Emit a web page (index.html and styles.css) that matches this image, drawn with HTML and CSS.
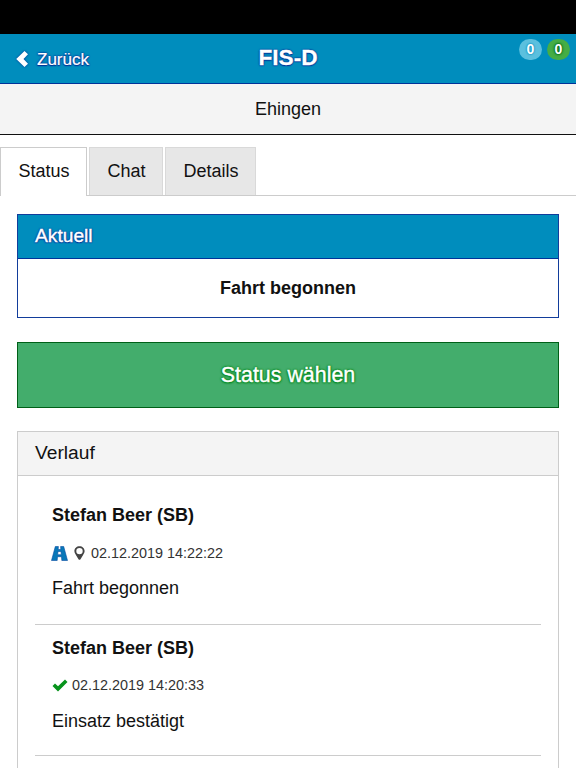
FILE: index.html
```html
<!DOCTYPE html>
<html lang="de">
<head>
<meta charset="utf-8">
<title>FIS-D</title>
<link rel="stylesheet" href="styles.css">
</head>
<body>
<div class="system-bar"></div>
<header class="navbar">
  <a class="back">
    <svg class="chevron" viewBox="0 0 12 16"><path d="M8.500 0 12 3.300 7.500 8 12 12.700 8.500 16 .2 8Z"/></svg>
    <span>Zurück</span>
  </a>
  <h1 class="title">FIS-D</h1>
  <div class="badges"><span class="badge info">0</span><span class="badge success">0</span></div>
</header>
<div class="location">Ehingen</div>
<nav class="tabs">
  <a class="tab active">Status</a>
  <a class="tab">Chat</a>
  <a class="tab">Details</a>
</nav>
<main>
  <section class="panel primary">
    <h2 class="panel-title">Aktuell</h2>
    <p class="current">Fahrt begonnen</p>
  </section>
  <button class="choose">Status wählen</button>
  <section class="panel history">
    <h2 class="panel-title">Verlauf</h2>
    <div class="entries">
      <article class="entry">
        <h3>Stefan Beer (SB)</h3>
        <div class="meta">
          <svg class="road" viewBox="0 0 17 15"><path fill="#0878b8" stroke="#074da3" stroke-width=".6" d="M4.300.5H7.400L7.200 3.500H9.800L9.600.5H12.700L16.500 14.500H10.800L10.500 10.700H6.500L6.200 14.500H.5ZM7 5.500 6.700 8.700H10.300L10 5.500Z"/></svg>
          <svg class="pin" viewBox="0 0 11 14"><path fill="#444" fill-rule="evenodd" d="M5.500.3C2.600.3.400 2.400.400 5.100.400 6.800 1.300 8 2.200 9.500L4.500 13.300Q5.500 14.300 6.500 13.300L8.800 9.500C9.700 8 10.600 6.800 10.600 5.100 10.600 2.400 8.400.3 5.500.3ZM5.500 1.900A3.200 3.200 0 1 1 5.500 8.300 3.200 3.200 0 1 1 5.500 1.900Z"/></svg>
          <time>02.12.2019 14:22:22</time>
        </div>
        <p>Fahrt begonnen</p>
      </article>
      <article class="entry">
        <h3>Stefan Beer (SB)</h3>
        <div class="meta">
          <svg class="check" viewBox="0 0 16 13"><path fill="#07931c" d="M.5 7 3 4.500 6 7.300 13 .5 15.500 3 6 12.500Z"/></svg>
          <time>02.12.2019 14:20:33</time>
        </div>
        <p>Einsatz bestätigt</p>
      </article>
    </div>
  </section>
</main>
</body>
</html>
```

FILE: styles.css
```css
* { box-sizing: border-box; }
html { height: 100%; overflow: hidden; }
body {
  display: flex;
  flex-direction: column;
  height: 100%;
  margin: 0;
  overflow: hidden;
  background: #fff;
  color: #111;
  font: 18px/24px "Liberation Sans", Arial, sans-serif;
}
h1, h2, h3, p { margin: 0; }
svg { display: block; flex: none; }

.system-bar { flex: none; height: 34px; background: #000; }
.navbar {
  display: grid;
  flex: none;
  grid-template-columns: 1fr auto 1fr;
  height: 50px;
  background: #008dbd;
  border-bottom: 1px solid #003399;
  color: #fff;
  text-shadow: 0 0 2px #003399, 0 0 2px #003399, 0 0 1px #003399, 0 1px 1px #003399;
}
.back { display: flex; align-items: center; gap: 9px; height: 50px; padding-left: 16px; font-size: 17px; }
.back span { padding-top: 1px; -webkit-text-stroke: .2px #fff; }
.chevron { width: 12px; height: 16px; fill: #fff; filter: drop-shadow(0 0 1px #003399); }
.title { font-size: 22.600px; line-height: 47px; -webkit-text-stroke: .3px #fff; }
.badges { display: flex; justify-content: flex-end; gap: 5px; padding: 5px 6px 0 0; }
.badge {
  width: 23px;
  height: 21px;
  border-radius: 11px;
  font-size: 14px;
  font-weight: bold;
  line-height: 20px;
  text-align: center;
}
.info { background: #5bc0de; text-shadow: 0 0 2px #008dbd, 0 0 2px #008dbd; }
.success { background: #45ad45; text-shadow: 0 0 2px #006b18, 0 0 2px #006b18, 0 0 3px #006b18; }

.location {
  flex: none;
  height: 51px;
  background: #f4f4f4;
  border-bottom: 1px solid #111;
  line-height: 50px;
  text-align: center;
}
.tabs { display: flex; flex: none; gap: 2px; height: 61px; padding-top: 12px; border-bottom: 1px solid #ccc; }
.tab { height: 48px; padding: 0 16.500px 0 17.500px; border: 1px solid #d9d9d9; border-bottom: 0; background: #e7e7e7; line-height: 46px; }
.tab.active { height: 49px; background: #fff; border-color: #ccc; }

main {
  display: flex;
  flex: 1;
  flex-direction: column;
  min-height: 0;
  padding: 18px 17px 0;
}
.panel { border: 1px solid #ccc; }
.panel-title {
  height: 44px;
  padding-left: 17px;
  border-bottom: 1px solid #ccc;
  background: #f4f4f4;
  font-size: 19.200px;
  font-weight: normal;
  line-height: 42px;
}
.primary { flex: none; height: 104px; border-color: #123d9b; }
.primary .panel-title {
  height: 43.500px;
  border-color: #003399;
  background: #008dbd;
  color: #fff;
  -webkit-text-stroke: .4px #fff;
  text-shadow: 0 0 2px #003399, 0 0 2px #003399, 0 0 1px #003399, 0 1px 1px #003399;
}
.current { font-weight: bold; line-height: 58px; text-align: center; }
.choose {
  display: block;
  flex: none;
  width: 100%;
  height: 66px;
  margin: 24px 0 23px;
  padding: 0;
  border: 1px solid #006018;
  background: #43ad6c;
  color: #fff;
  font: 21.400px/64px "Liberation Sans", Arial, sans-serif;
  -webkit-text-stroke: .4px #fff;
  text-shadow: 0 0 2px #00881b, 0 0 2px #00881b, 0 0 3px #00881b, 0 1px 2px #00881b;
}
.history { flex: 1; min-height: 0; border-bottom: 0; overflow: hidden; }
.entries { padding: 17px 17px 0; }
.entry { height: 132px; padding: 10px 17px 0; border-bottom: 1px solid #ccc; }
.entry + .entry { height: 131px; padding-top: 11px; }
.entry h3 { font-size: 18px; }
.meta { display: flex; align-items: center; height: 24px; margin: 14px 0 11px; color: #333; font-size: 14.400px; }
.entry + .entry .meta { margin: 13px 0 12px; }
.road { width: 17px; height: 15px; margin: 0 6px 0 -1px; }
.pin { width: 11px; height: 14px; margin-right: 6px; }
.check { width: 16px; height: 13px; margin-right: 4px; }
```
